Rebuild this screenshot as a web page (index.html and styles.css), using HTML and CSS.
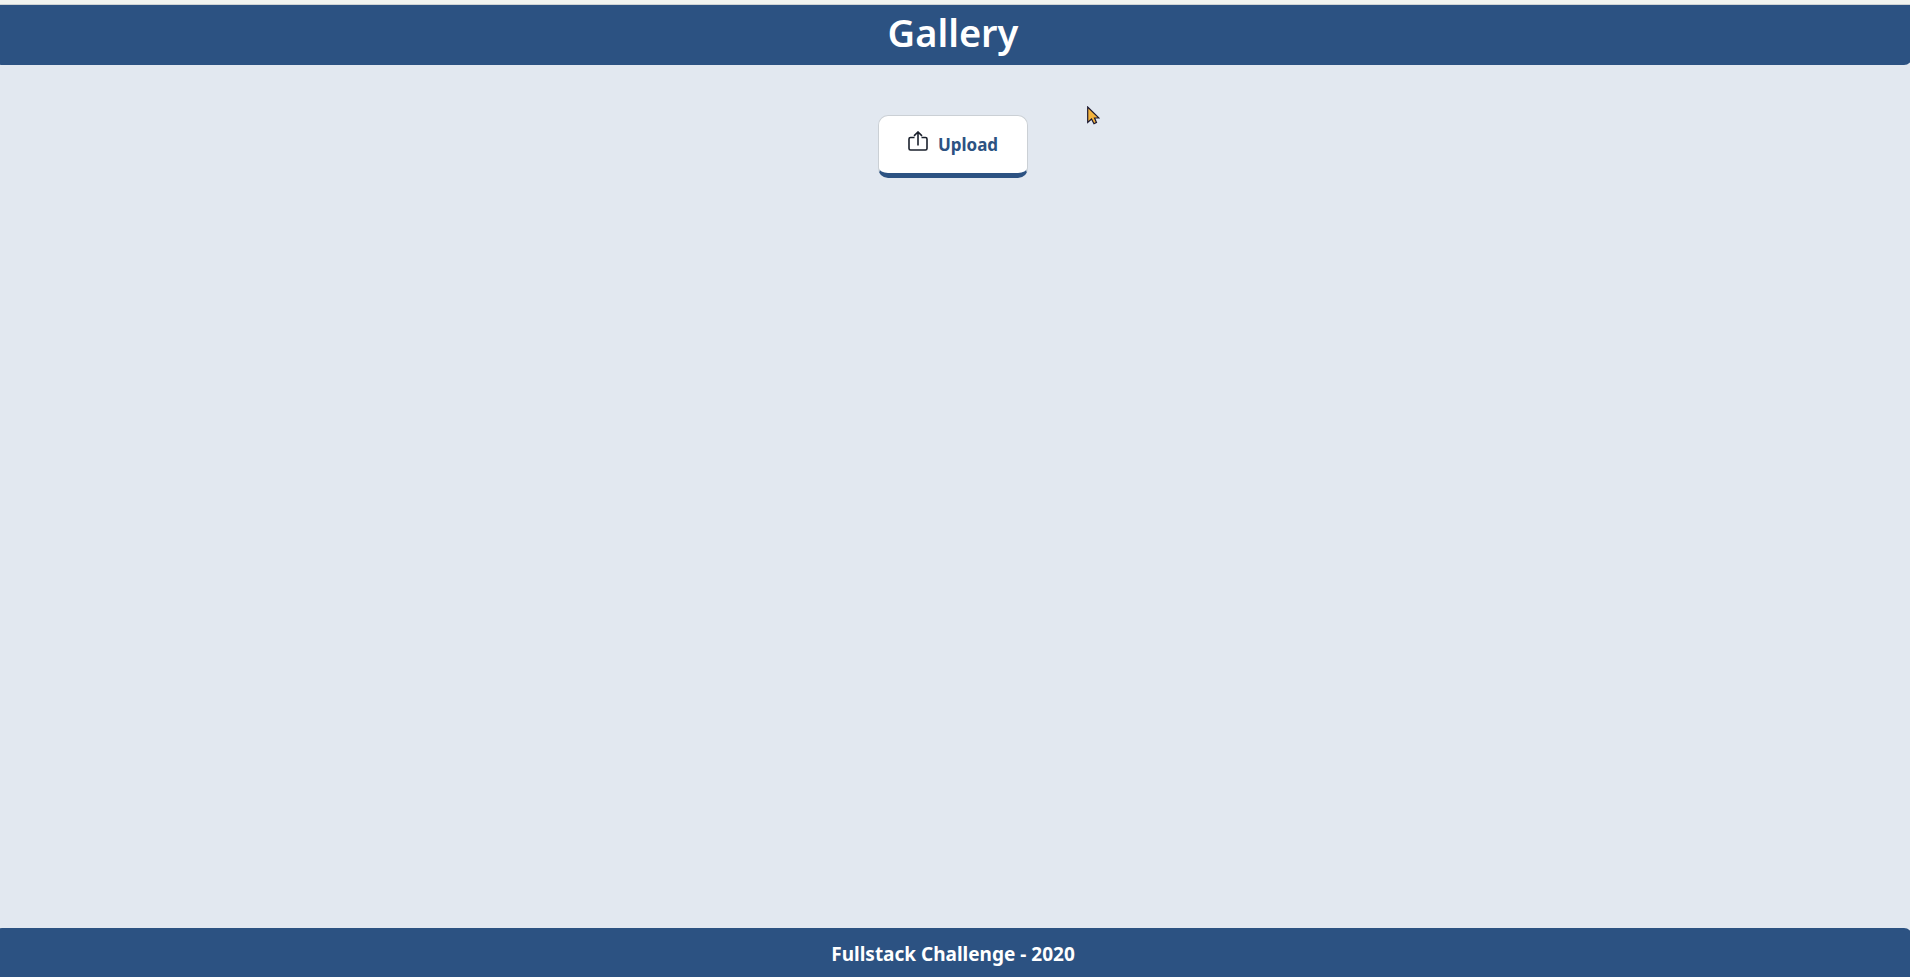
FILE: index.html
```html
<!DOCTYPE html>
<html lang="en">
<head>
<meta charset="utf-8">
<title>Gallery</title>
<link rel="stylesheet" href="styles.css">
</head>
<body>
<div class="page">
  <header class="header"><h1 class="title">Gallery</h1></header>
  <main class="main">
    <button class="upload" type="button">
      <svg class="upload-icon" viewBox="0 0 20 20" aria-hidden="true"><path d="M6.5 6.5H2.5Q1 6.5 1 8V17.5Q1 19 2.5 19H17.5Q19 19 19 17.5V8Q19 6.5 17.5 6.5H13.5M10 14.5V1M6 4.8L10 1L14 4.8"/></svg>
      <span>Upload</span>
    </button>
  </main>
  <footer class="footer">Fullstack Challenge - 2020</footer>
</div>
<svg class="pointer" viewBox="0 0 13 19" aria-hidden="true"><path d="M.7 1V16.5L4.5 13L7 17.7L9.5 16.4L7.5 12H12Z"/></svg>
</body>
</html>
```
FILE: styles.css
```css
* { box-sizing: border-box; }
body {
  margin: 0;
  overflow: hidden;
  background: #e2e8f0;
  font-family: "Segoe UI", "Noto Sans", "Open Sans", sans-serif;
}
.page {
  display: flex;
  flex-direction: column;
  min-height: 100vh;
  margin: 0 -2px 0 -6px;
  border-top: 4px solid #f1f3f0;
}
.header {
  height: 61px;
  border-top: 1px solid #cfd3d4;
  border-radius: 0 0 8px 8px;
  background: #2c5282;
  color: #fff;
  text-align: center;
}
.title {
  margin: 0;
  font-size: 38px;
  font-weight: 600;
  line-height: 54px;
}
.main {
  flex: 1;
  display: flex;
  justify-content: center;
  align-items: flex-start;
  padding-top: 50px;
}
.upload {
  display: flex;
  align-items: center;
  gap: 10px;
  height: 63px;
  padding: 0 29px;
  border: 1px solid #cbd0d5;
  border-bottom: 5px solid #2c5282;
  border-radius: 10px;
  background: #fff;
  color: #2c5282;
  font: inherit;
  font-size: 17px;
  font-weight: 700;
  line-height: 24px;
}
.upload-icon {
  width: 20px;
  height: 20px;
  margin-bottom: 8px;
  fill: none;
  stroke: #1a202c;
  stroke-width: 1.6;
}
.footer {
  height: 49px;
  border-radius: 8px 8px 0 0;
  background: #2c5282;
  color: #fff;
  text-align: center;
  font-size: 19px;
  font-weight: 700;
  line-height: 52px;
}
.pointer {
  position: absolute;
  left: 1087px;
  top: 106px;
  width: 13px;
  height: 19px;
  fill: #f3b33e;
  stroke: #1c1830;
  stroke-width: 1.2;
}
```
